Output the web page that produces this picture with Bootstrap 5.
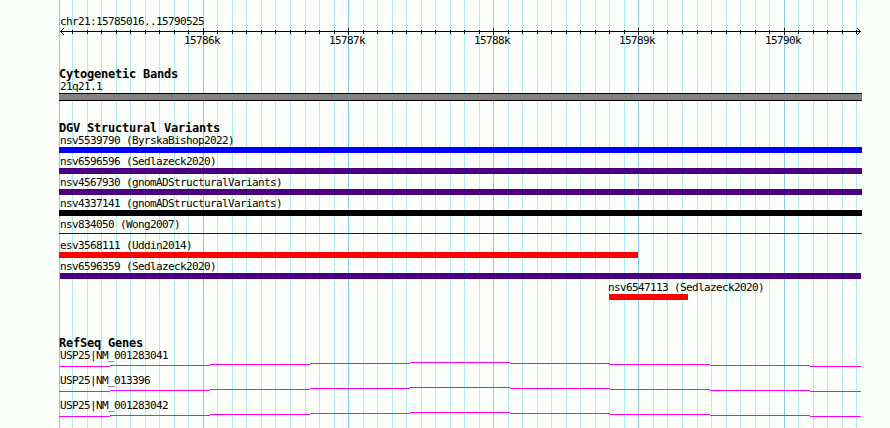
<!DOCTYPE html>
<html lang="en">
<head>
  <meta charset="UTF-8">
  <title>chr21:15785016..15790525</title>
  <meta name="viewport" content="width=device-width, initial-scale=1">
  <link rel="stylesheet" href="https://cdn.jsdelivr.net/npm/bootstrap@5.3.0/dist/css/bootstrap.min.css">
  <style>
    body {
      height: 428px;
      background-color: #fdfffc;
      color: #000;
      font: 11px/12px "DejaVu Sans Mono", "Liberation Mono", monospace;
      letter-spacing: -0.622px;
      white-space: nowrap;
    }
    /* Tracks start one pixel left of the ruler origin */
    .browser {
      height: 428px;
      padding-left: 59px;
    }
    svg {
      display: block;
      shape-rendering: crispEdges;
    }
    .region { height: 28px; padding: 16px 0 0 1px; }
    .ruler { height: 40px; }
    .ruler-label { top: 7px; transform: translateX(-19px); }
    .track-title {
      font-size: 12px;
      line-height: 13px;
      font-weight: bold;
      letter-spacing: -0.224px;
      height: 12px;
      margin: 0;
    }
    .feature { height: 21px; }
    .feature-name { height: 13px; padding: 1px 0 0 1px; }
    .bar { height: 6px; }
    .line { height: 1px; margin-top: 2px; }
    .bg-indigo { background-color: #4b0082; }
    .bg-blue { background-color: #00f; }
    .bg-red { background-color: #f00; }
    .band {
      width: 803px;
      height: 8px;
      background-color: #848084;
      border: solid #000;
      border-width: 1px 0;
    }
    .cyto { height: 54px; }
    .variants { height: 215px; }
    .gene { height: 25px; }
  </style>
</head>
<body>
  <div class="browser position-relative overflow-hidden">
    <!-- Grid behind every track -->
    <svg id="grid" class="position-absolute top-0 start-0" width="890" height="428"></svg>

    <div class="position-relative">
      <div class="region">chr21:15785016..15790525</div>
      <div class="ruler position-relative" id="ruler">
        <svg id="axis" width="803" height="8"></svg>
      </div>

      <section class="cyto">
        <h2 class="track-title">Cytogenetic Bands</h2>
        <div class="feature-name">21q21.1</div>
        <div class="band"></div>
      </section>

      <section class="variants">
        <h2 class="track-title">DGV Structural Variants</h2>
        <div id="variants"></div>
      </section>

      <section>
        <h2 class="track-title">RefSeq Genes</h2>
        <div id="genes"></div>
      </section>
    </div>
  </div>

  <script src="https://cdn.jsdelivr.net/npm/bootstrap@5.3.0/dist/js/bootstrap.bundle.min.js"></script>
  <script>
    const start = 15785016, end = 15790525;
    const toX = pos => Math.round(60 + (pos - start) * 800 / (end - start + 1));

    // Grid lines every 100 bp, ruler ticks on the same positions
    let grid = '<rect x="59" y="0" width="1" height="428" fill="#87ceeb"/>';
    let axis = '<path d="M1 3.5H802" stroke="#000"/>';
    for (let pos = 15785100; pos <= end; pos += 100) {
      const x = toX(pos);
      const major = pos % 1000 === 0;
      grid += `<rect x="${x}" y="0" width="1" height="428" fill="${major ? "#87ceeb" : "#afeeee"}"/>`;
      axis += `<rect x="${x - 59}" y="${major ? 0 : 2}" width="1" height="${major ? 7 : 4}"/>`;
      if (major) {
        document.getElementById("ruler").insertAdjacentHTML("beforeend",
          `<span class="ruler-label position-absolute" style="left:${x - 59}px">${pos / 1000}k</span>`);
      }
    }
    // Arrow heads, one pixel per row
    for (let i = 0; i < 4; i++) {
      for (const y of [3 - i, 3 + i]) {
        axis += `<rect x="${1 + i}" y="${y}" width="1" height="1"/>`;
        axis += `<rect x="${801 - i}" y="${y}" width="1" height="1"/>`;
      }
    }
    // The grid svg covers the page, so its own origin is the page corner
    document.getElementById("grid").innerHTML = grid;
    document.getElementById("axis").innerHTML = axis;

    const variants = [
      { name: "nsv5539790 (ByrskaBishop2022)", x: 0, width: 803, style: "bar bg-blue" },
      { name: "nsv6596596 (Sedlazeck2020)", x: 0, width: 803, style: "bar bg-indigo" },
      { name: "nsv4567930 (gnomADStructuralVariants)", x: 0, width: 803, style: "bar bg-indigo" },
      { name: "nsv4337141 (gnomADStructuralVariants)", x: 0, width: 803, style: "bar bg-black" },
      { name: "nsv834050 (Wong2007)", x: 0, width: 803, style: "line bg-blue" },
      { name: "esv3568111 (Uddin2014)", x: 0, width: 579, style: "bar bg-red" },
      { name: "nsv6596359 (Sedlazeck2020)", x: 1, width: 801, style: "bar bg-indigo" },
      { name: "nsv6547113 (Sedlazeck2020)", x: 550, width: 79, style: "bar bg-red", label: 548 }
    ];
    document.getElementById("variants").innerHTML = variants.map(v => `
      <div class="feature">
        <div class="feature-name" style="margin-left:${v.label || 0}px">${v.name}</div>
        <div class="${v.style}" style="margin-left:${v.x}px;width:${v.width}px"></div>
      </div>`).join("");

    // Introns drawn as a shallow stepped hat
    const steps = [[0, 4], [51, 3], [151, 2], [251, 1], [351, 0], [451, 1], [551, 2], [651, 3], [751, 4]];
    const hat = steps.map(([x, y], i) => {
      const next = i + 1 < steps.length ? steps[i + 1][0] : 802;
      return `<rect x="${x}" y="${y}" width="${next - x}" height="1" fill="#f0f"/>`;
    }).join("");
    document.getElementById("genes").innerHTML = ["USP25|NM_001283041", "USP25|NM_013396", "USP25|NM_001283042"].map(name => `
      <div class="gene">
        <div class="feature-name">${name}</div>
        <svg width="803" height="5">${hat}</svg>
      </div>`).join("");
  </script>
</body>
</html>
